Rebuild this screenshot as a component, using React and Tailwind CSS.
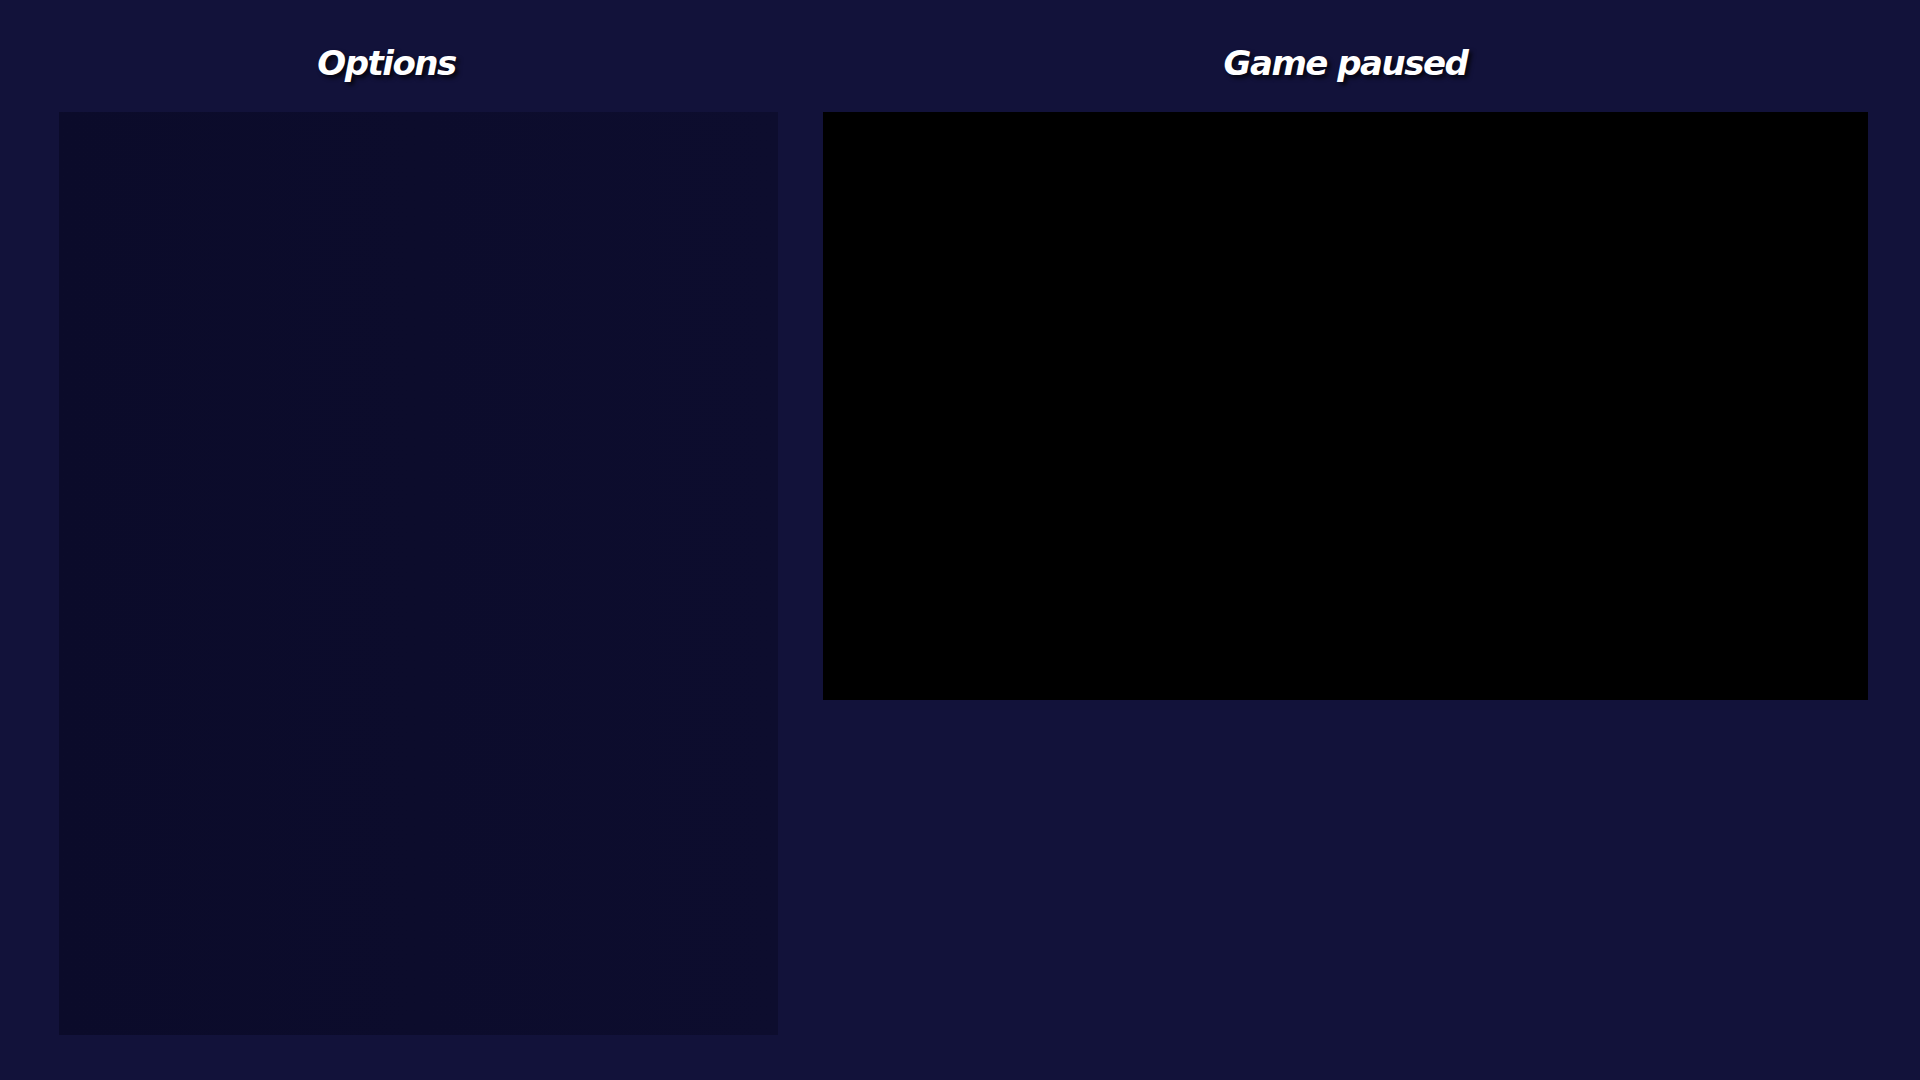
export default function App() {
  return (
    <div
      className="flex h-[1080px] w-[1920px] gap-[45px] bg-[#12123a] pl-[59px] pr-[52px] text-white"
      style={{ fontFamily: '"DejaVu Sans", Verdana, sans-serif' }}
    >
      <section className="flex w-[719px] flex-col">
        <h1 className="flex h-[112px] w-[655px] items-center justify-center pt-[14px] text-[34px] font-bold italic tracking-[-1.5px] [text-shadow:3px_3px_4px_rgba(0,0,0,0.75)]">
          Options
        </h1>
        <div className="h-[923px] w-full bg-[linear-gradient(90deg,#0b0b2a,#0d0d2e)]" />
      </section>

      <section className="flex w-[1045px] flex-col">
        <h1 className="flex h-[112px] items-center justify-center pt-[14px] text-[34px] font-bold italic tracking-[-1.5px] [text-shadow:3px_3px_4px_rgba(0,0,0,0.75)]">
          Game paused
        </h1>
        <div className="aspect-video w-full bg-black" />
      </section>
    </div>
  );
}
